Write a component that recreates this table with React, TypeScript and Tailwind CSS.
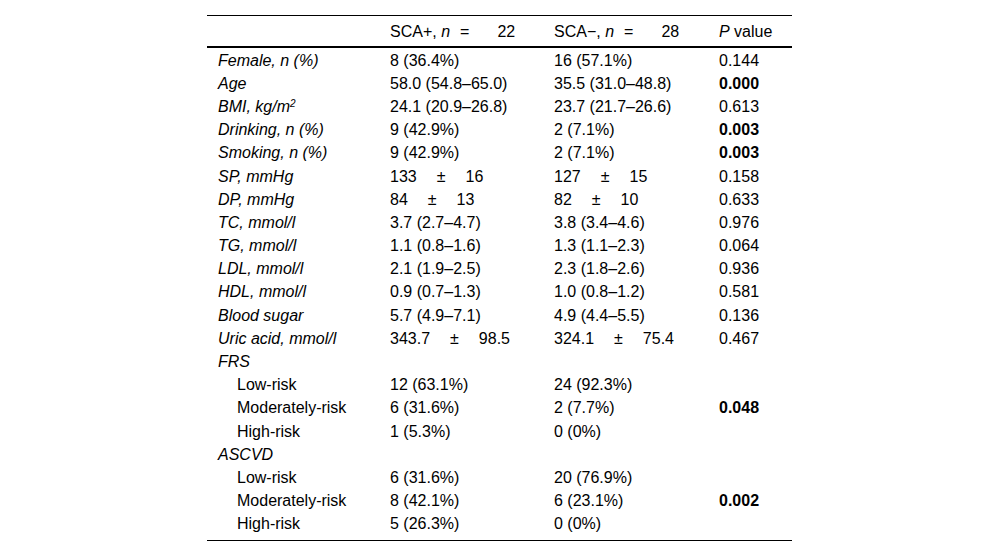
import React from 'react';

type Row = {
  label: React.ReactNode;
  a: React.ReactNode;
  b: React.ReactNode;
  p?: string;
  bold?: boolean;
  indent?: boolean;
};

const pm = (x: string, y: string) => (
  <>
    {x}
    <span className="mx-[20px]">±</span>
    {y}
  </>
);

const rows: Row[] = [
  { label: 'Female, n (%)', a: '8 (36.4%)', b: '16 (57.1%)', p: '0.144' },
  { label: 'Age', a: '58.0 (54.8–65.0)', b: '35.5 (31.0–48.8)', p: '0.000', bold: true },
  {
    label: (
      <>
        BMI, kg/m<sup className="text-[10px]">2</sup>
      </>
    ),
    a: '24.1 (20.9–26.8)',
    b: '23.7 (21.7–26.6)',
    p: '0.613',
  },
  { label: 'Drinking, n (%)', a: '9 (42.9%)', b: '2 (7.1%)', p: '0.003', bold: true },
  { label: 'Smoking, n (%)', a: '9 (42.9%)', b: '2 (7.1%)', p: '0.003', bold: true },
  { label: 'SP, mmHg', a: pm('133', '16'), b: pm('127', '15'), p: '0.158' },
  { label: 'DP, mmHg', a: pm('84', '13'), b: pm('82', '10'), p: '0.633' },
  { label: 'TC, mmol/l', a: '3.7 (2.7–4.7)', b: '3.8 (3.4–4.6)', p: '0.976' },
  { label: 'TG, mmol/l', a: '1.1 (0.8–1.6)', b: '1.3 (1.1–2.3)', p: '0.064' },
  { label: 'LDL, mmol/l', a: '2.1 (1.9–2.5)', b: '2.3 (1.8–2.6)', p: '0.936' },
  { label: 'HDL, mmol/l', a: '0.9 (0.7–1.3)', b: '1.0 (0.8–1.2)', p: '0.581' },
  { label: 'Blood sugar', a: '5.7 (4.9–7.1)', b: '4.9 (4.4–5.5)', p: '0.136' },
  { label: 'Uric acid, mmol/l', a: pm('343.7', '98.5'), b: pm('324.1', '75.4'), p: '0.467' },
  { label: 'FRS', a: '', b: '' },
  { label: 'Low-risk', a: '12 (63.1%)', b: '24 (92.3%)', indent: true },
  { label: 'Moderately-risk', a: '6 (31.6%)', b: '2 (7.7%)', p: '0.048', bold: true, indent: true },
  { label: 'High-risk', a: '1 (5.3%)', b: '0 (0%)', indent: true },
  { label: 'ASCVD', a: '', b: '' },
  { label: 'Low-risk', a: '6 (31.6%)', b: '20 (76.9%)', indent: true },
  { label: 'Moderately-risk', a: '8 (42.1%)', b: '6 (23.1%)', p: '0.002', bold: true, indent: true },
  { label: 'High-risk', a: '5 (26.3%)', b: '0 (0%)', indent: true },
];

const cols = 'grid grid-cols-[172px_164px_165px_1fr] pl-[11px]';

export default function App() {
  return (
    <div className="min-h-[557px] bg-white pt-[15px] font-['Liberation_Sans',Arial,sans-serif] text-[16px] leading-[18px] text-black">
      <div className="ml-[207px] w-[585px] border-t border-b border-black pb-[4px]">
        <div className={`${cols} h-[32px] items-center border-b-2 border-black pt-[2px]`}>
          <div />
          <div>
            SCA+, <i>n</i>
            <span className="ml-[10px] mr-[28px]">=</span>
            22
          </div>
          <div>
            SCA−, <i>n</i>
            <span className="ml-[10px] mr-[28px]">=</span>
            28
          </div>
          <div>
            <i>P</i> value
          </div>
        </div>
        <div className="pt-px">
          {rows.map((r, i) => (
            <div key={i} className={`${cols} h-[23.2px] items-center whitespace-nowrap`}>
              <div className={r.indent ? 'pl-[19px]' : 'italic'}>{r.label}</div>
              <div>{r.a}</div>
              <div>{r.b}</div>
              <div className={r.bold ? 'font-bold' : ''}>{r.p}</div>
            </div>
          ))}
        </div>
      </div>
    </div>
  );
}
